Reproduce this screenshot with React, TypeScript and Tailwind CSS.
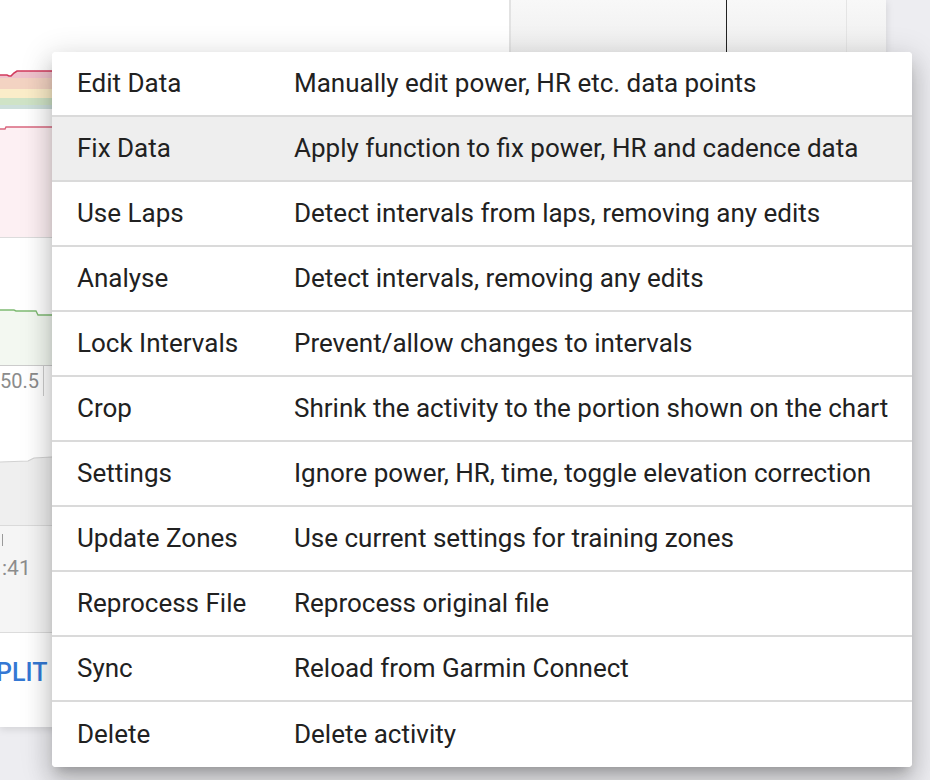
import * as React from "react";

// ── Data ─────────────────────────────────────────────────────────────────────

const items: { label: string; desc: string }[] = [
  { label: "Edit Data", desc: "Manually edit power, HR etc. data points" },
  { label: "Fix Data", desc: "Apply function to fix power, HR and cadence data" },
  { label: "Use Laps", desc: "Detect intervals from laps, removing any edits" },
  { label: "Analyse", desc: "Detect intervals, removing any edits" },
  { label: "Lock Intervals", desc: "Prevent/allow changes to intervals" },
  { label: "Crop", desc: "Shrink the activity to the portion shown on the chart" },
  { label: "Settings", desc: "Ignore power, HR, time, toggle elevation correction" },
  { label: "Update Zones", desc: "Use current settings for training zones" },
  { label: "Reprocess File", desc: "Reprocess original file" },
  { label: "Sync", desc: "Reload from Garmin Connect" },
  { label: "Delete", desc: "Delete activity" },
];

// ── Background activity card (mostly hidden under the menu) ──────────────────

function PowerChart() {
  return (
    <svg width="886" height="44" viewBox="0 0 886 44" className="block">
      <rect x="0" y="0" width="886" height="12" fill="#efc3cc" />
      <rect x="0" y="12" width="886" height="11" fill="#f3d3c2" />
      <rect x="0" y="23" width="886" height="9" fill="#fbedc9" />
      <rect x="0" y="32" width="886" height="7" fill="#cfe3c6" />
      <rect x="0" y="39" width="886" height="4" fill="#cddfdb" />
      <polygon points="0,0 886,0 886,5 17,5 14,6 10,10 8,10 7,9 0,9" fill="#ffffff" />
      <polyline points="0,9 7,9 9,10 11,10 14,7 17,5 886,5" fill="none" stroke="#d23a5c" strokeWidth="1.6" />
    </svg>
  );
}

function HeartChart() {
  return (
    <svg width="886" height="112" viewBox="0 0 886 112" className="block">
      <polygon points="0,4 5,4 6,2 886,2 886,112 0,112" fill="#fdf0f3" />
      <polyline points="0,4 5,4 6,2 886,2" fill="none" stroke="#d9677f" strokeWidth="1.5" />
    </svg>
  );
}

function CadenceChart() {
  return (
    <svg width="886" height="57" viewBox="0 0 886 57" className="block">
      <polygon points="0,2 14,2 16,3 36,3 38,7 886,7 886,57 0,57" fill="#f3f8f1" />
      <polyline points="0,2 14,2 16,3 36,3 38,7 886,7" fill="none" stroke="#7fba73" strokeWidth="1.4" />
    </svg>
  );
}

function AltitudeChart() {
  return (
    <svg width="886" height="69" viewBox="0 0 886 69" className="block">
      <polygon points="0,6 28,5 34,2 52,1 886,1 886,69 0,69" fill="#efefef" />
      <polyline points="0,6 28,5 34,2 52,1 886,1" fill="none" stroke="#d2d2d2" strokeWidth="1.2" />
    </svg>
  );
}

function ActivityCard() {
  return (
    <div className="w-[886px] h-[727px] bg-white shadow-[0_2px_8px_rgba(0,0,0,0.12)] flex flex-col overflow-hidden">
      {/* header strip */}
      <div className="h-[52px] flex shrink-0">
        <div className="flex-1" />
        <div className="w-[377px] flex bg-gradient-to-b from-[#f8f8f8] to-[#efefef] border-l-2 border-[#e2e2e2]">
          <div className="w-[216px] border-r-[1.5px] border-[#222]" />
          <div className="w-[120px] border-r border-[#e4e4e4]" />
        </div>
      </div>

      <div className="h-[14px] shrink-0" />
      <PowerChart />
      <div className="h-[15px] shrink-0" />
      <HeartChart />
      <div className="h-px bg-[#dcdcdc] shrink-0" />

      <div className="h-[70px] shrink-0" />
      <CadenceChart />

      {/* axis row */}
      <div className="h-[31px] flex border-t border-[#cccccc] shrink-0">
        <div className="w-[44px] border-r border-[#cccccc] flex items-center">
          <span className="text-[20px] leading-none text-[#8c8c8c] font-['Roboto',sans-serif]">50.5</span>
        </div>
      </div>

      <div className="h-[60px] shrink-0" />
      <AltitudeChart />
      <div className="h-px bg-[#dadada] shrink-0" />

      {/* time axis */}
      <div className="h-[106px] bg-[#f5f5f5] flex flex-col pl-[2px] pt-[8px] shrink-0">
        <div className="w-px h-[12px] bg-[#9a9a9a]" />
        <span className="mt-[12px] text-[21px] leading-none text-[#8c8c8c] font-['Roboto',sans-serif]">:41</span>
      </div>
      <div className="h-px bg-[#dcdcdc] shrink-0" />

      <div className="flex-1 flex items-center">
        <span className="ml-[-4px] mb-[14px] text-[25px] font-medium text-[#3478d4] font-['Roboto',sans-serif]">PLIT</span>
      </div>
    </div>
  );
}

// ── Menu ─────────────────────────────────────────────────────────────────────

function ActionMenu({ active }: { active: number }) {
  return (
    <div className="absolute left-[52px] top-[52px] w-[860px] bg-white rounded-[4px] overflow-hidden shadow-[0_8px_10px_-5px_rgba(0,0,0,0.2),0_16px_24px_2px_rgba(0,0,0,0.14),0_6px_30px_5px_rgba(0,0,0,0.12)] font-['Roboto',sans-serif] text-[#212121]">
      {items.map((it, i) => (
        <div
          key={it.label}
          className={
            "h-[65px] flex items-center pl-[25px] text-[26px] " +
            (i < items.length - 1 ? "border-b-2 border-[#dadada] " : "") +
            (i === active ? "bg-[#eeeeee]" : "bg-white")
          }
        >
          <span className="w-[217px] shrink-0">{it.label}</span>
          <span className="whitespace-nowrap">{it.desc}</span>
        </div>
      ))}
    </div>
  );
}

export default function App() {
  return (
    <div className="relative w-[930px] h-[780px] bg-[#ededf1] overflow-hidden">
      <ActivityCard />
      <ActionMenu active={1} />
    </div>
  );
}
